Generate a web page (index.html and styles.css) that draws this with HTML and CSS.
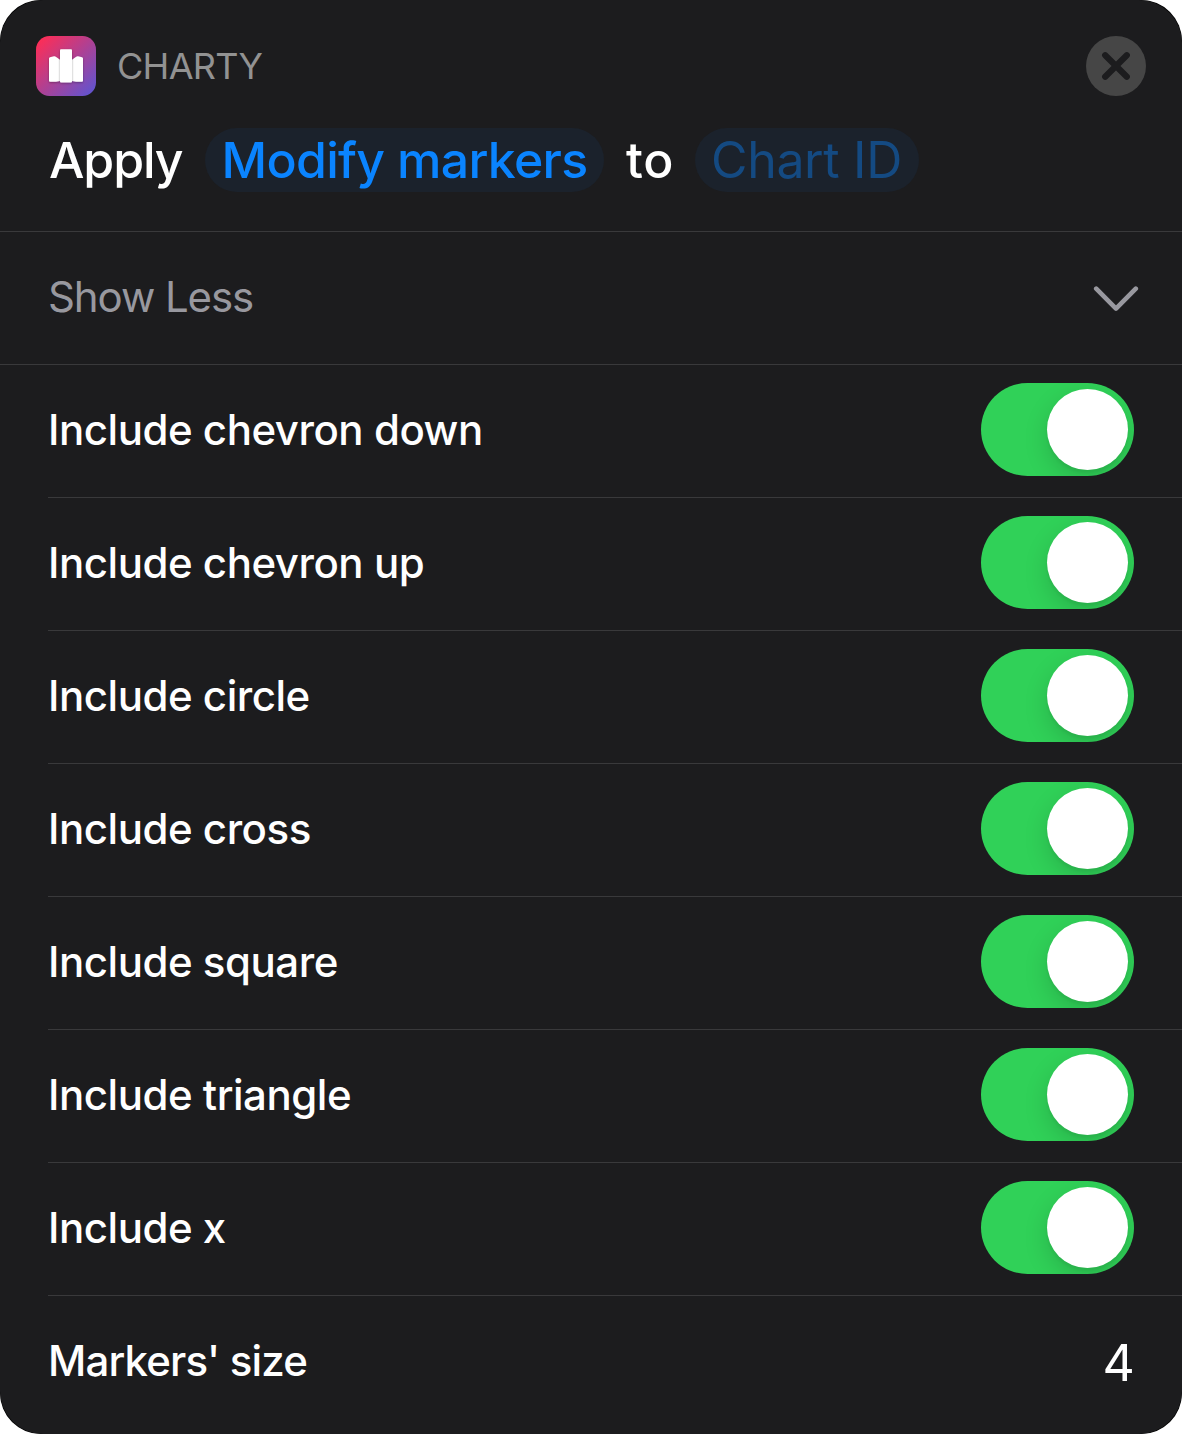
FILE: index.html
```html
<!DOCTYPE html>
<html lang="en">
<head>
<meta charset="utf-8">
<title>Charty</title>
<link rel="stylesheet" href="styles.css">
</head>
<body>
<div class="frame">
<main class="card">
  <header class="header">
    <div class="app">
      <svg class="app-icon" width="60" height="60" viewBox="0 0 60 60" aria-hidden="true">
        <defs>
          <linearGradient id="tile" x1="0" y1="0" x2="1" y2="1">
            <stop offset="0.05" stop-color="#ff2d55"/>
            <stop offset="1" stop-color="#5856d6"/>
          </linearGradient>
          <filter id="soft" x="-30%" y="-30%" width="160%" height="160%">
            <feDropShadow dx="0" dy="0.8" stdDeviation="1" flood-color="#000" flood-opacity="0.35"/>
          </filter>
        </defs>
        <rect width="60" height="60" rx="13.5" fill="url(#tile)"/>
        <g fill="#fff" filter="url(#soft)">
          <path d="M13 22.500q0-1 1-1.300l4-.9q1-.2 1.800.5l4.200 3V45l-4 .7H14q-1 0-1-1z"/>
          <path d="M47 22.500q0-1-1-1.300l-4-.9q-1-.2-1.800.5l-4.200 3V45l4 .7H46q1 0 1-1z"/>
        </g>
        <rect x="24" y="13.200" width="12" height="33.300" rx="1" fill="#fff" filter="url(#soft)"/>
      </svg>
      <span class="app-name">CHARTY</span>
      <svg class="close" width="60" height="60" viewBox="0 0 60 60" role="img" aria-label="Close">
        <circle cx="30" cy="30" r="30" fill="#464646"/>
        <path d="M19.200 19.200 40.800 40.800M40.800 19.200 19.200 40.800" stroke="#1c1c1e" stroke-width="6.200" stroke-linecap="round"/>
      </svg>
    </div>
    <div class="summary">
      <span class="word apply">Apply</span>
      <span class="pill action">Modify markers</span>
      <span class="word to">to</span>
      <span class="pill placeholder">Chart ID</span>
    </div>
  </header>
  <div class="row disclosure">
    <span class="label">Show Less</span>
    <svg class="chevron" width="46" height="28" viewBox="0 0 46 28" aria-hidden="true">
      <path d="M3.200 3.700 23 23.600 42.800 3.700" fill="none" stroke="#98989f" stroke-width="4.600" stroke-linecap="round" stroke-linejoin="round"/>
    </svg>
  </div>
  <div class="options">
    <div class="row"><span class="label">Include chevron down</span><span class="toggle"></span></div>
    <div class="row"><span class="label">Include chevron up</span><span class="toggle"></span></div>
    <div class="row"><span class="label">Include circle</span><span class="toggle"></span></div>
    <div class="row"><span class="label">Include cross</span><span class="toggle"></span></div>
    <div class="row"><span class="label">Include square</span><span class="toggle"></span></div>
    <div class="row"><span class="label">Include triangle</span><span class="toggle"></span></div>
    <div class="row"><span class="label">Include x</span><span class="toggle"></span></div>
    <div class="row last"><span class="label">Markers' size</span><span class="value">4</span></div>
  </div>
</main>
</div>
</body>
</html>
```

FILE: styles.css
```css
* { box-sizing: border-box; }

body {
  margin: 0;
  background: #fff;
  color: #fff;
  font-family: Inter, "Liberation Sans", sans-serif;
}

.frame {
  height: 1434px;
  border-radius: 41px;
  background: #000;
}

.card {
  height: 100%;
  border-radius: 43px;
  background: #1c1c1e;
  overflow: hidden;
}

.header {
  height: 232px;
  padding-top: 36px;
  border-bottom: 1px solid #39393b;
}

.app {
  display: flex;
  align-items: center;
  height: 60px;
  padding: 0 36px;
}

.app-name {
  margin-left: 21px;
  color: #929292;
  font-size: 36px;
  line-height: 60px;
  letter-spacing: -0.7px;
}

.close { margin-left: auto; }

.summary {
  display: flex;
  align-items: center;
  height: 64px;
  margin-top: 31.5px;
  padding-left: 49px;
  font-size: 50px;
  font-weight: 500;
  line-height: 64px;
  white-space: nowrap;
}

.apply {
  width: 156px;
  letter-spacing: -1.1px;
}

.to {
  width: 69px;
  letter-spacing: 0.6px;
}

.pill {
  height: 64px;
  border-radius: 32px;
  background: #1b222c;
  color: #0a84ff;
}

.action {
  width: 399px;
  margin-right: 22px;
  padding-left: 16.5px;
  letter-spacing: -0.7px;
}

.placeholder {
  width: 224px;
  padding-left: 16px;
  color: #144a82;
  font-weight: 400;
  letter-spacing: -0.35px;
}

.row {
  display: flex;
  align-items: center;
  justify-content: space-between;
  height: 133px;
  padding: 0 48px 3px 0;
  border-bottom: 1px solid #39393b;
  font-size: 42px;
  font-weight: 500;
  letter-spacing: -0.47px;
  white-space: nowrap;
}

.disclosure {
  padding: 0 43px 4px 48px;
  color: #98989f;
  font-weight: 400;
  letter-spacing: -1.1px;
}

.chevron { margin-top: 6px; }

.options { padding-left: 48px; }

.toggle {
  display: flex;
  justify-content: flex-end;
  width: 153px;
  height: 93px;
  padding: 6px;
  border-radius: 46.5px;
  background: #30d158;
  overflow: hidden;
}

.toggle::before {
  content: "";
  width: 81px;
  height: 81px;
  border-radius: 50%;
  background: #fff;
  box-shadow: 0 9px 24px rgba(0, 0, 0, 0.15), 0 3px 3px rgba(0, 0, 0, 0.05);
}

.last {
  padding-bottom: 5px;
  border-bottom: 0;
  letter-spacing: -0.85px;
}

.value {
  padding-top: 6px;
  font-size: 50px;
  font-weight: 400;
}
```
